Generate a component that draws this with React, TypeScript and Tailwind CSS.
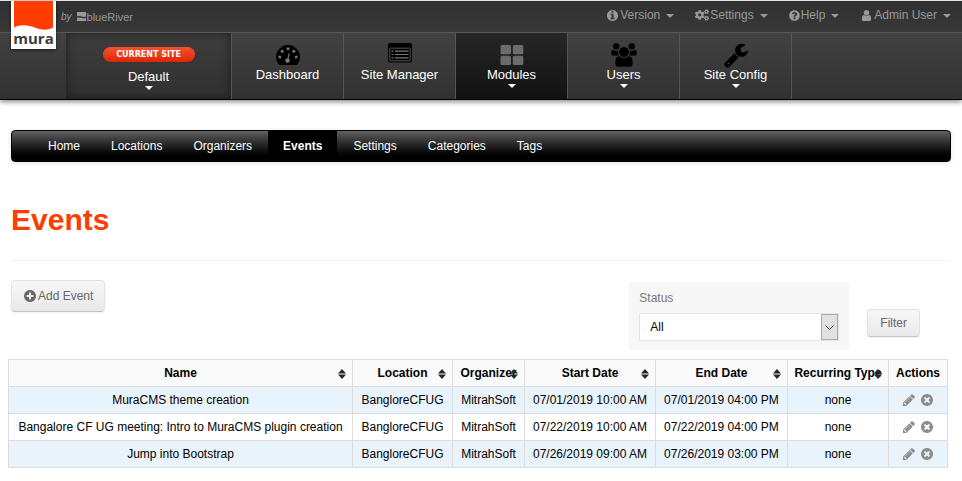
import React from "react";
import { FaCogs, FaQuestionCircle } from "react-icons/fa";

const DISC =
  "M1664 896q0 209-103 385.5t-279.5 279.5-385.5 103-385.5-103-279.5-279.5-103-385.5 103-385.5 279.5-279.5 385.5-103 385.5 103 279.5 279.5 103 385.5z";

const PATHS = {
  info:
    "M1152 1376v-160q0-14-9-23t-23-9h-96v-512q0-14-9-23t-23-9h-320q-14 0-23 9t-9 23v160q0 14 9 23t23 9h96v320h-96q-14 0-23 9t-9 23v160q0 14 9 23t23 9h448q14 0 23-9t9-23zM1024 480v-160q0-14-9-23t-23-9h-192q-14 0-23 9t-9 23v160q0 14 9 23t23 9h192q14 0 23-9t9-23z" +
    DISC,
  plus:
    "M1344 960v-128q0-26-19-45t-45-19h-256v-256q0-26-19-45t-45-19h-128q-26 0-45 19t-19 45v256h-256q-26 0-45 19t-19 45v128q0 26 19 45t45 19h256v256q0 26 19 45t45 19h128q26 0 45-19t19-45v-256h256q26 0 45-19t19-45z" +
    DISC,
  remove:
    "M1277 1122q0-26-19-45l-181-181 181-181q19-19 19-45 0-27-19-46l-90-90q-19-19-46-19-26 0-45 19l-181 181-181-181q-19-19-45-19-27 0-46 19l-90 90q-19 19-19 46 0 26 19 45l181 181-181 181q-19 19-19 45 0 27 19 46l90 90q19 19 46 19 26 0 45-19l181-181 181 181q19 19 45 19 27 0 46-19l90-90q19-19 19-46z" +
    DISC,
  user:
    "M1536 1399q0 109-62.5 187t-150.5 78h-854q-88 0-150.5-78t-62.5-187q0-85 8.5-160.5t31.5-152 58.5-131 94-89 134.5-34.5q131 128 313 128t313-128q76 0 134.5 34.5t94 89 58.5 131 31.5 152 8.5 160.5zm-256-887q0 159-112.5 271.5t-271.5 112.5-271.5-112.5-112.5-271.5 112.5-271.5 271.5-112.5 271.5 112.5 112.5 271.5z",
  pencil:
    "M491 1536l91-91-235-235-91 91v107h128v128h107zm523-928q0-22-22-22-10 0-17 7l-542 542q-7 7-7 17 0 22 22 22 10 0 17-7l542-542q7-7 7-17zm-54-192l416 416-832 832h-416v-416zm683 96q0 53-37 90l-166 166-416-416 166-165q36-38 90-38 53 0 91 38l235 234q37 39 37 91z",
  wrench:
    "M448 1472q0-26-19-45t-45-19-45 19-19 45 19 45 45 19 45-19 19-45zm644-420l-682 682q-37 37-90 37-52 0-91-37l-106-108q-38-36-38-90 0-53 38-91l681-681q39 98 114.5 173.5t173.5 114.5zm634-435q0 39-23 106-47 134-164.5 217.5t-258.5 83.5q-185 0-316.5-131.5t-131.5-316.5 131.5-316.5 316.5-131.5q58 0 121.5 16.5t107.5 46.5q16 11 16 28t-16 28l-293 169v224l193 107q5-3 79-48.5t135.5-81 70.5-35.5q15 0 23.5 10t8.5 25z",
};

function Glyph({ name, className }: { name: keyof typeof PATHS; className: string }) {
  return (
    <svg viewBox="0 0 1792 1792" className={className} fill="currentColor" fillRule="evenodd" aria-hidden="true">
      <path d={PATHS[name]} />
    </svg>
  );
}

function Caret({ className }: { className: string }) {
  return (
    <svg viewBox="0 0 8 4" className={className} fill="currentColor" aria-hidden="true">
      <path d="M0 0h8L4 4z" />
    </svg>
  );
}

function GaugeIcon() {
  return (
    <svg viewBox="0 0 24 20" className="h-5 w-6" aria-hidden="true">
      <path d="M3 20A12 12 0 1 1 21 20z" fill="#000" />
      <g fill="#777">
        <circle cx="3.8" cy="12" r="1.5" />
        <circle cx="6.2" cy="6.2" r="1.5" />
        <circle cx="12" cy="3.8" r="1.5" />
        <circle cx="17.8" cy="6.2" r="1.5" />
        <circle cx="20.2" cy="12" r="1.5" />
        <circle cx="11.5" cy="15.6" r="2.3" />
      </g>
      <path d="M11.5 15.6 13.2 8.5" stroke="#777" strokeWidth="1.2" />
    </svg>
  );
}

function ListIcon() {
  return (
    <svg viewBox="0 0 24 20" className="-mt-1 h-5 w-6" aria-hidden="true">
      <rect width="24" height="19.5" rx="2" fill="#000" />
      <rect x="1.8" y="5.2" width="20.4" height="12.6" rx="0.5" fill="none" stroke="#555" strokeWidth="1" />
      <path d="M3.5 8.2h2M3.5 11.5h2M3.5 14.8h2M7 8.2h13.5M7 11.5h13.5M7 14.8h13.5" stroke="#777" strokeWidth="1.2" />
    </svg>
  );
}

function GridIcon() {
  return (
    <svg viewBox="0 0 24 20" className="h-5 w-6" fill="#6b6b6b" aria-hidden="true">
      <rect x="0.5" width="10.5" height="9.3" rx="1.5" />
      <rect x="12.8" width="10.5" height="9.3" rx="1.5" />
      <rect x="0.5" y="10.7" width="10.5" height="9.3" rx="1.5" />
      <rect x="12.8" y="10.7" width="10.5" height="9.3" rx="1.5" />
    </svg>
  );
}

function GroupIcon() {
  return (
    <svg viewBox="0 0 26 24" className="h-6 w-[26px] shrink-0" fill="#000" stroke="#3b3b3b" strokeWidth="0.5" aria-hidden="true">
      <circle cx="5.2" cy="3.4" r="3.4" />
      <circle cx="20.8" cy="3.4" r="3.4" />
      <path d="M2 6.8c2 1.400 4 1.400 5.800.6-.8 2-.5 4 .6 5.400H3C1.200 12.800 0 12 0 10.500 0 8.500.6 6.800 2 6.800zM24 6.800c-2 1.400-4 1.400-5.800.6.8 2 .5 4-.6 5.400H23c1.800 0 3-.8 3-2.300 0-2-.6-3.700-2-3.700z" />
      <path d="M8.200 12.800c3 2.700 6.600 2.700 9.600 0 3 .4 4.200 3.800 4.200 7.200 0 2.600-1.600 4-3.800 4H7.800C5.600 24 4 22.600 4 20c0-3.400 1.200-6.800 4.200-7.200z" />
      <circle cx="13" cy="9" r="5.200" />
    </svg>
  );
}

const utilities = [
  { label: "Version", icon: <Glyph name="info" className="size-[13px]" /> },
  { label: "Settings", icon: <FaCogs className="size-[14px]" /> },
  { label: "Help", icon: <FaQuestionCircle className="size-[11px]" /> },
  { label: "Admin User", icon: <Glyph name="user" className="size-[13px]" /> },
];

const sections = [
  { label: "Dashboard", icon: <GaugeIcon />, caret: false, active: false },
  { label: "Site Manager", icon: <ListIcon />, caret: false, active: false },
  { label: "Modules", icon: <GridIcon />, caret: true, active: true },
  { label: "Users", icon: <GroupIcon />, caret: true, active: false },
  { label: "Site Config", icon: <Glyph name="wrench" className="size-[26px] shrink-0 text-black" />, caret: true, active: false },
];

const tabs = ["Home", "Locations", "Organizers", "Events", "Settings", "Categories", "Tags"];

const columns = [
  { label: "Name", width: "" },
  { label: "Location", width: "w-[100px]" },
  { label: "Organizer", width: "w-[72px]" },
  { label: "Start Date", width: "w-[131px]" },
  { label: "End Date", width: "w-[132px]" },
  { label: "Recurring Type", width: "w-[101px]" },
  { label: "Actions", width: "w-[59px]" },
];

const events = [
  ["MuraCMS theme creation", "BangloreCFUG", "MitrahSoft", "07/01/2019 10:00 AM", "07/01/2019 04:00 PM", "none"],
  ["Bangalore CF UG meeting: Intro to MuraCMS plugin creation", "BangloreCFUG", "MitrahSoft", "07/22/2019 10:00 AM", "07/22/2019 04:00 PM", "none"],
  ["Jump into Bootstrap", "BangloreCFUG", "MitrahSoft", "07/26/2019 09:00 AM", "07/26/2019 03:00 PM", "none"],
];

const buttonStyle =
  "flex items-center justify-center gap-px rounded border border-[#e2e2e2] border-b-[#c4c4c4] bg-linear-to-b from-[#f7f7f7] to-[#e9e9e9] text-[#666] shadow-[0_1px_2px_rgba(0,0,0,0.06)]";

function Logo() {
  return (
    <a href="#home" className="relative -mb-5 ml-[11px] flex h-12 w-[45px] flex-col items-center bg-white shadow-[0_1px_3px_rgba(0,0,0,0.6)]">
      <svg viewBox="0 0 39 30" className="h-[30px] w-[39px] shrink-0" aria-hidden="true">
        <path d="M0 0h39v26.500c-4 2.500-10 3-17 .5C14 23.500 6 23.500 0 26.500z" fill="#ff3d00" />
      </svg>
      <span className="font-['Open_Sans',sans-serif] text-[15px] leading-[14px] font-bold text-[#3c3c3c]">mura</span>
    </a>
  );
}

export default function App() {
  return (
    <div className="bg-white pb-3 font-['Liberation_Sans',Arial,sans-serif] text-xs leading-[18px] text-black">
      <header className="border-t border-[#e2e8e5] shadow-[0_2px_5px_rgba(0,0,0,0.45)]">
        <div className="flex h-[31px] items-start justify-between bg-linear-to-b from-[#303030] to-[#383838]">
          <div className="flex items-start">
            <Logo />
            <div className="flex h-[31px] items-center gap-[5px] pl-[5px] text-[#999]">
              <span className="text-[10px] italic">by</span>
              <span className="flex items-center gap-px text-[11px]">
                <svg viewBox="0 0 9 9" className="size-[9px]" aria-hidden="true">
                  <path d="M0 0h9v4.500C6 6 4 3 0 4.500zM0 6c4-1.500 6 1.500 9 0v3H0z" fill="#999" />
                </svg>
                blueRiver
              </span>
            </div>
          </div>
          <ul className="flex h-7 items-center gap-[21px] pr-[11px]">
            {utilities.map((u) => (
              <li key={u.label}>
                <button type="button" className="flex items-center gap-px text-[#999]">
                  {u.icon}
                  <span>{u.label}</span>
                  <Caret className="mt-px ml-[5px] h-1 w-2" />
                </button>
              </li>
            ))}
          </ul>
        </div>
        <nav className="flex h-[68px] border-t border-b border-t-[#595959] border-b-black bg-linear-to-b from-[#424242] to-[#313131] pl-[66px] text-[13px] text-white [text-shadow:0_1px_1px_#000]">
          <button
            type="button"
            className="flex w-[166px] flex-col items-center border-r border-[#555] bg-linear-to-b from-[#3d3d3d] to-[#303030] pt-[14px] shadow-[inset_0_0_10px_rgba(0,0,0,0.5)]"
          >
            <span className="flex h-[15px] w-[92px] items-center justify-center rounded-full bg-linear-to-b from-[#f5512f] to-[#dd2400] font-['DejaVu_Sans',sans-serif] text-[8px] font-bold text-white [text-shadow:none]">
              CURRENT SITE
            </span>
            <span className="mt-[6px]">Default</span>
            <Caret className="h-1 w-2" />
          </button>
          {sections.map((s) => (
            <button
              type="button"
              key={s.label}
              className={
                "flex w-28 flex-col items-center border-r border-[#555] " +
                (s.active ? "bg-linear-to-b from-[#262626] to-[#121212]" : "")
              }
            >
              <span className="mt-[11px] flex h-[22px] items-center justify-center">{s.icon}</span>
              <span>{s.label}</span>
              {s.caret && <Caret className="h-1 w-2" />}
            </button>
          ))}
        </nav>
      </header>

      <main className="pt-[30px]">
        <nav className="mx-[11px] flex h-8 items-stretch gap-px rounded border border-black bg-linear-to-b from-[#616161] to-black pl-[21px] text-white shadow-[0_1px_5px_rgba(0,0,0,0.12)]">
          {tabs.map((t) => (
            <a
              key={t}
              href={"#" + t.toLowerCase()}
              className={"flex items-center px-[15px] " + (t === "Events" ? "bg-black font-bold" : "")}
            >
              {t}
            </a>
          ))}
        </nav>

        <div className="mx-[11px] mt-[38px] border-b border-[#f2f2f2] pb-5">
          <h1 className="text-[30px] leading-10 font-bold text-[#ff3d00]">Events</h1>
        </div>

        <div className="mr-[42px] ml-[11px] flex items-start justify-between pt-[19px]">
          <button type="button" className={buttonStyle + " h-8 px-[11px]"}>
            <Glyph name="plus" className="size-[14px]" />
            Add Event
          </button>
          <div className="flex items-center gap-[18px] pt-[2px]">
            <div className="flex h-[68px] w-[220px] flex-col rounded-xs bg-[#f7f7f7] px-[10px] pt-[7px]">
              <label htmlFor="status" className="text-[#777]">
                Status
              </label>
              <div className="relative mt-[6px]">
                <select
                  id="status"
                  defaultValue="All"
                  className="block h-7 w-full appearance-none border border-[#e4e4e4] bg-white pl-[10px] text-black"
                >
                  <option>All</option>
                </select>
                <span className="pointer-events-none absolute top-px right-px flex h-[26px] w-[17px] items-center justify-center border border-[#a9a9a9] bg-[#e1e1e1]">
                  <svg viewBox="0 0 9 5" className="h-[5px] w-[9px]" aria-hidden="true">
                    <path d="M.5.5l4 4 4-4" fill="none" stroke="#444" />
                  </svg>
                </span>
              </div>
            </div>
            <button type="button" className={buttonStyle + " mt-[14px] h-7 px-3"}>
              Filter
            </button>
          </div>
        </div>

        <div className="mt-[9px] mr-[14px] ml-2">
          <table className="w-full table-fixed border-collapse border border-[#ddd] text-center">
            <thead>
              <tr className="h-[27px] bg-[#fafafa]">
                {columns.map((c) => (
                  <th key={c.label} scope="col" className={"relative border border-[#ddd] p-0 font-bold whitespace-nowrap " + c.width}>
                    {c.label}
                    {c.label !== "Actions" && (
                      <svg viewBox="0 0 8 10" className="absolute top-[9px] right-[6px] h-[10px] w-2" fill="#1d2a2a" aria-hidden="true">
                        <path d="M4 0 8 4.500H0zM4 10 0 5.500h8z" />
                      </svg>
                    )}
                  </th>
                ))}
              </tr>
            </thead>
            <tbody>
              {events.map((row) => (
                <tr key={row[0]} className="h-[27px] odd:bg-[#e9f3fc]">
                  {row.map((cell, i) => (
                    <td key={i} className="border border-[#ddd] p-0 whitespace-nowrap">
                      {cell}
                    </td>
                  ))}
                  <td className="border border-[#ddd] p-0">
                    <span className="flex items-center justify-center gap-1 text-[#8c8c8c]">
                      <button type="button" aria-label="Edit">
                        <Glyph name="pencil" className="size-[14px]" />
                      </button>
                      <button type="button" aria-label="Delete">
                        <Glyph name="remove" className="size-[14px]" />
                      </button>
                    </span>
                  </td>
                </tr>
              ))}
            </tbody>
          </table>
        </div>
      </main>
    </div>
  );
}
